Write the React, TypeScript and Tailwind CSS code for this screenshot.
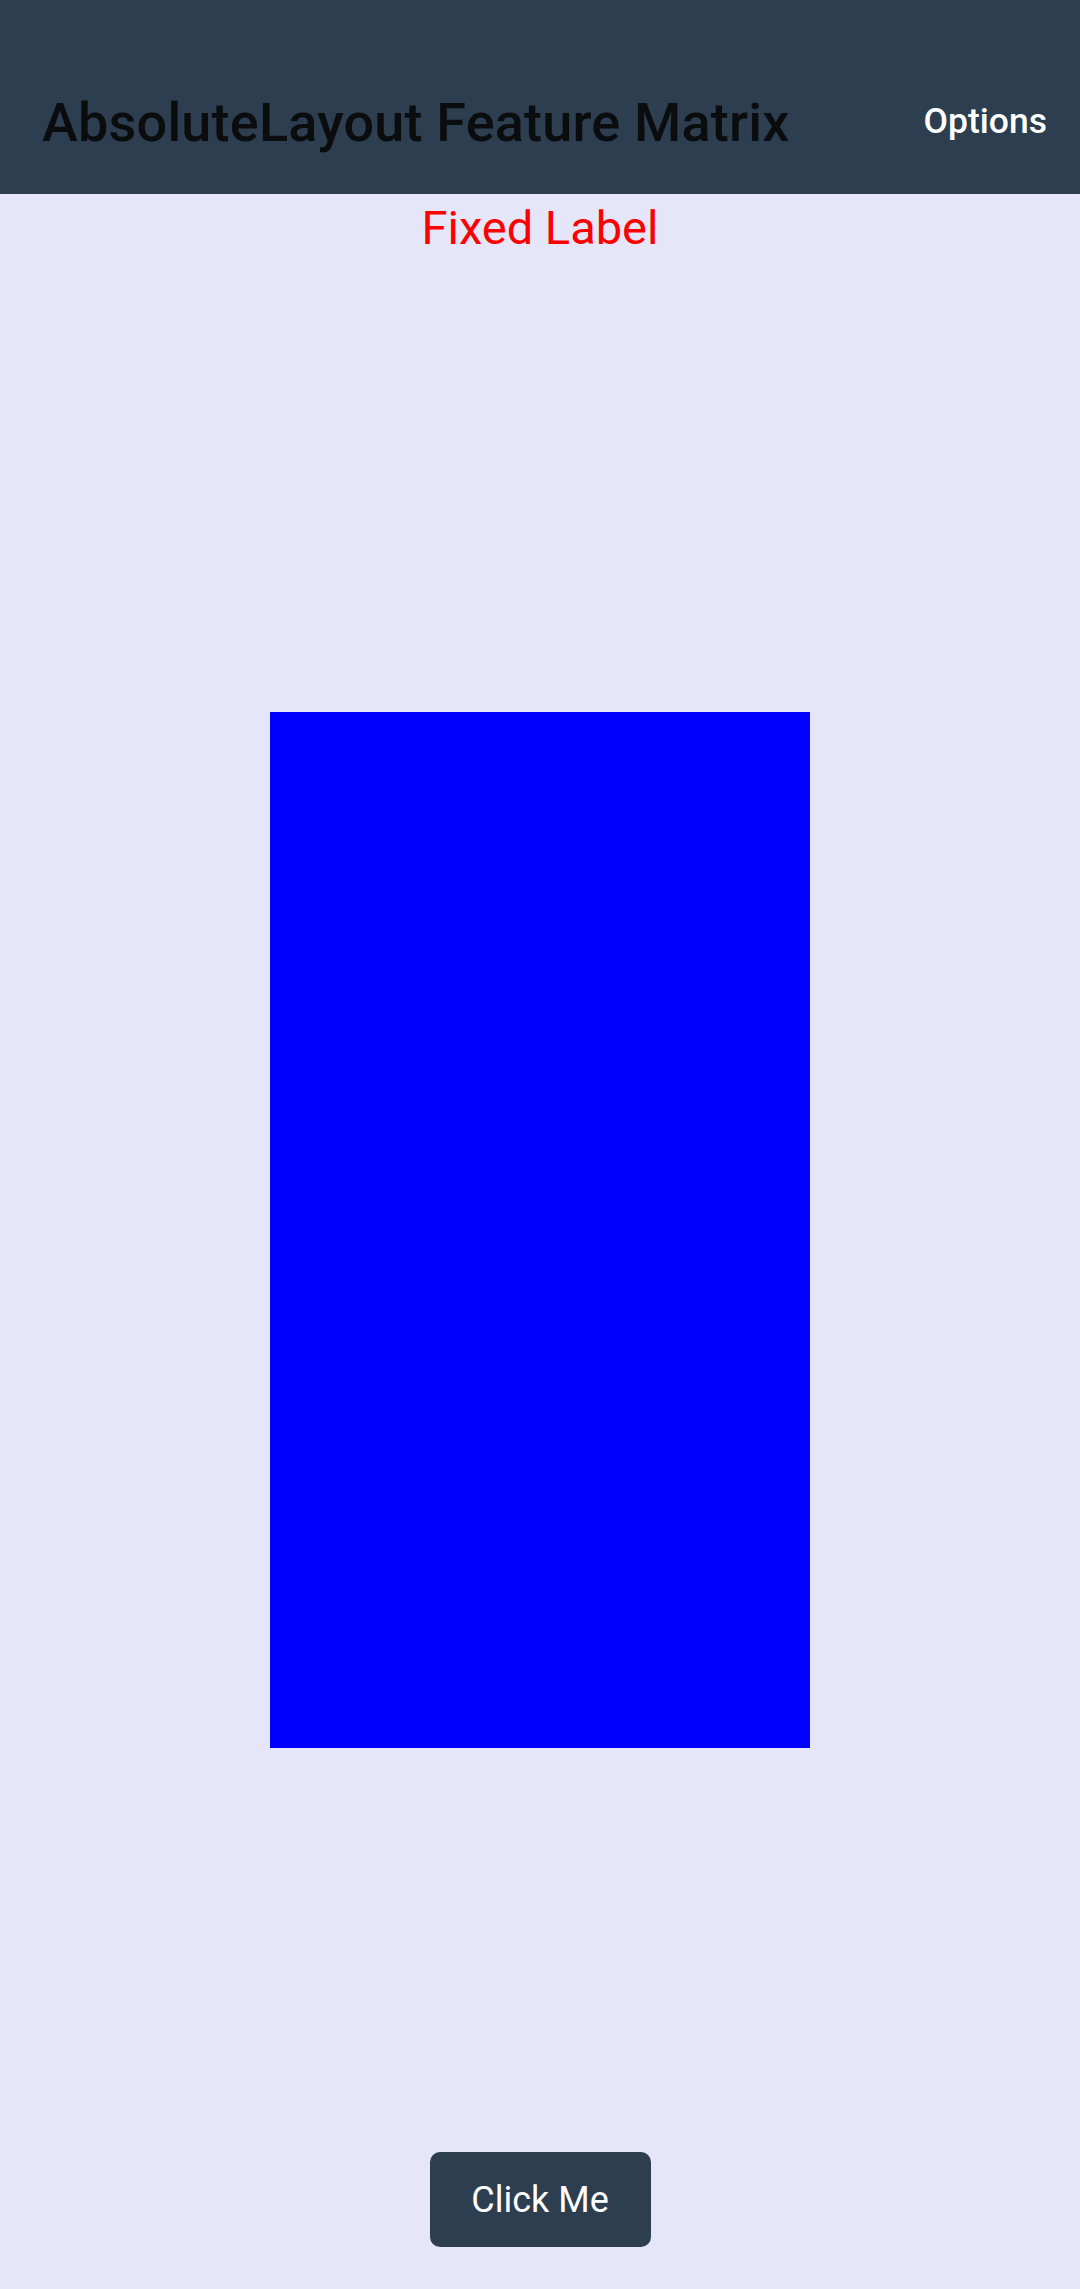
export default function App() {
  return (
    <div
      className="flex min-h-[2289px] w-[1080px] flex-col bg-[#e6e6fa]"
      style={{ fontFamily: 'Roboto, "Liberation Sans", sans-serif' }}
    >
      {/* Toolbar */}
      <header className="h-[194px] bg-[#2c3e50] pt-[50px]">
        <div className="flex h-[144px] items-center justify-between pl-[42px] pr-[33px]">
          <h1 className="text-[54px] font-medium leading-normal tracking-[0.2px] text-[#0b0c0e]">
            AbsoluteLayout Feature Matrix
          </h1>
          <button className="text-[35.5px] font-medium leading-normal text-white">Options</button>
        </div>
      </header>

      {/* Content */}
      <main className="flex flex-1 flex-col items-center">
        <p className="mt-[6px] text-[47px] leading-[56px] text-[#ff0000]">Fixed Label</p>
        <div className="mt-[456px] h-[1036px] w-[540px] bg-[#0000ff]" />
        <button className="mt-[404px] mb-[42px] flex h-[95px] w-[221px] items-center justify-center rounded-[10px] bg-[#2c3e50] text-[36px] leading-normal text-white">
          Click Me
        </button>
      </main>
    </div>
  );
}
